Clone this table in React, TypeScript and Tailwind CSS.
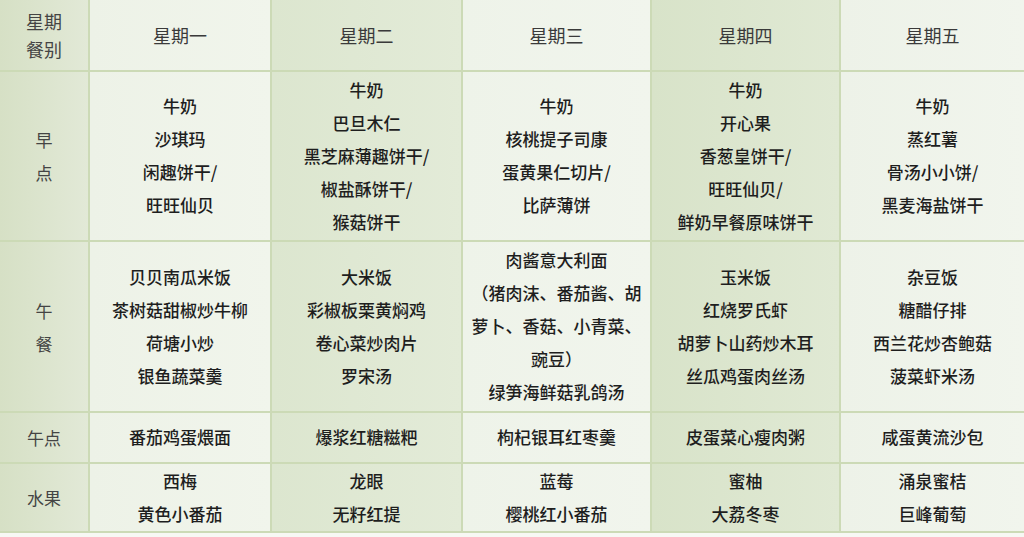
const days = ["星期一", "星期二", "星期三", "星期四", "星期五"];

const rows: { label: string[]; cells: string[][] }[] = [
  {
    label: ["早", "点"],
    cells: [
      ["牛奶", "沙琪玛", "闲趣饼干/", "旺旺仙贝"],
      ["牛奶", "巴旦木仁", "黑芝麻薄趣饼干/", "椒盐酥饼干/", "猴菇饼干"],
      ["牛奶", "核桃提子司康", "蛋黄果仁切片/", "比萨薄饼"],
      ["牛奶", "开心果", "香葱皇饼干/", "旺旺仙贝/", "鲜奶早餐原味饼干"],
      ["牛奶", "蒸红薯", "骨汤小小饼/", "黑麦海盐饼干"],
    ],
  },
  {
    label: ["午", "餐"],
    cells: [
      ["贝贝南瓜米饭", "茶树菇甜椒炒牛柳", "荷塘小炒", "银鱼蔬菜羹"],
      ["大米饭", "彩椒板栗黄焖鸡", "卷心菜炒肉片", "罗宋汤"],
      ["肉酱意大利面", "（猪肉沫、番茄酱、胡萝卜、香菇、小青菜、豌豆）", "绿笋海鲜菇乳鸽汤"],
      ["玉米饭", "红烧罗氏虾", "胡萝卜山药炒木耳", "丝瓜鸡蛋肉丝汤"],
      ["杂豆饭", "糖醋仔排", "西兰花炒杏鲍菇", "菠菜虾米汤"],
    ],
  },
  {
    label: ["午点"],
    cells: [["番茄鸡蛋煨面"], ["爆浆红糖糍粑"], ["枸杞银耳红枣羹"], ["皮蛋菜心瘦肉粥"], ["咸蛋黄流沙包"]],
  },
  {
    label: ["水果"],
    cells: [
      ["西梅", "黄色小番茄"],
      ["龙眼", "无籽红提"],
      ["蓝莓", "樱桃红小番茄"],
      ["蜜柚", "大荔冬枣"],
      ["涌泉蜜桔", "巨峰葡萄"],
    ],
  },
];

// alternating column tints, light / green
const colBg = [
  "bg-gradient-to-r from-[#edf2e7] to-[#f1f5ec]",
  "bg-gradient-to-r from-[#dce6cf] to-[#e3ebd8]",
  "bg-gradient-to-r from-[#eef3e9] to-[#f1f5ed]",
  "bg-gradient-to-r from-[#d8e3c9] to-[#e0e9d4]",
  "bg-gradient-to-r from-[#edf2e8] to-[#f1f5ed]",
];

const labelBg = "bg-gradient-to-r from-[#d6e0c5] to-[#e2e9d7]";

export default function App() {
  return (
    <div
      className="h-[537px] w-[1024px] overflow-hidden bg-[#f7f8f4]"
      style={{ fontFamily: '"Noto Sans CJK SC", "Noto Sans", sans-serif' }}
    >
      <div className="grid grid-cols-[88px_180px_189px_187px_187px_1fr] grid-rows-[70px_168px_169px_49px_67px] gap-[2px] bg-[#ccdab6] pb-[2px]">
        <div className={`${labelBg} flex flex-col items-center justify-center text-[18px] leading-[28px] text-[#444]`}>
          <span>星期</span>
          <span>餐别</span>
        </div>
        {days.map((d, i) => (
          <div key={d} className={`${colBg[i]} flex items-center justify-center text-[18px] text-[#3a3a3a]`}>
            {d}
          </div>
        ))}

        {rows.map((r) => (
          <Row key={r.label.join("")} label={r.label} cells={r.cells} />
        ))}
      </div>
    </div>
  );
}

function Row({ label, cells }: { label: string[]; cells: string[][] }) {
  return (
    <>
      <div className={`${labelBg} flex flex-col items-center justify-center text-[17px] leading-[33px] text-[#444]`}>
        {label.map((l) => (
          <span key={l}>{l}</span>
        ))}
      </div>
      {cells.map((items, i) => (
        <div
          key={i}
          className={`${colBg[i]} flex flex-col items-center justify-center px-2 pb-[2px] text-center text-[17px] font-medium leading-[33px] text-[#1e1e1e]`}
        >
          {items.map((t) => (
            <span key={t}>{t}</span>
          ))}
        </div>
      ))}
    </>
  );
}
